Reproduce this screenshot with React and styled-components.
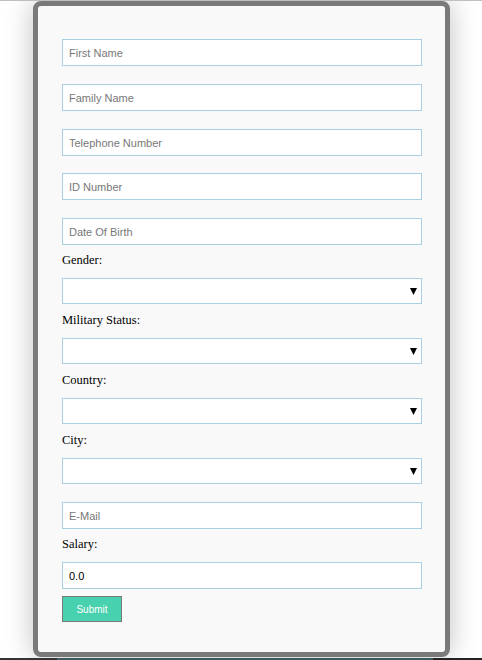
import React from "react";
import styled, { createGlobalStyle } from "styled-components";

const Global = createGlobalStyle`
  html, body { margin: 0; padding: 0; background: #ffffff; }
  body {
    border-top: 1px solid #bfbfbf;
    font-family: "Liberation Serif", "Times New Roman", serif;
  }
`;

const Page = styled.div`
  display: flex;
  flex-direction: column;
  align-items: stretch;
  height: 659px;
  overflow: hidden;
`;

const Card = styled.form`
  box-sizing: border-box;
  flex: 0 0 auto;
  margin-left: 33px;
  width: 417px;
  height: 656px;
  background: #f9f9f9;
  border: 5px solid #7a7a7a;
  border-radius: 8px;
  box-shadow: 0 0 28px rgba(0, 0, 0, 0.25);
  padding: 33px 23px 0 24px;
  display: flex;
  flex-direction: column;
  align-items: flex-start;
`;

const Input = styled.input`
  box-sizing: border-box;
  display: block;
  width: 360px;
  height: 27px;
  margin: 0 0 ${(p) => p.$mb ?? 18}px 0;
  padding: 0 6px;
  border: 1px solid #a9cfe2;
  border-radius: 0;
  background: #ffffff;
  font-family: "Liberation Sans", Arial, sans-serif;
  font-size: 11px;
  color: #000;
  outline: none;
  &::placeholder { color: #777777; opacity: 1; }
`;

const Label = styled.label`
  display: block;
  font-family: "Liberation Serif", "Times New Roman", serif;
  font-size: 12.5px;
  line-height: 15px;
  color: #000;
  margin: 0 0 10px 0;
`;

const SelectWrap = styled.div`
  position: relative;
  width: 360px;
  height: 26px;
  margin-bottom: ${(p) => p.$mb ?? 9}px;
`;

const Select = styled.select`
  box-sizing: border-box;
  appearance: none;
  -webkit-appearance: none;
  width: 100%;
  height: 100%;
  border: 1px solid #a9cfe2;
  border-radius: 0;
  background: #ffffff;
  margin: 0;
  font-family: "Liberation Sans", Arial, sans-serif;
  font-size: 11px;
  outline: none;
`;

const Arrow = styled.svg`
  position: absolute;
  right: 5px;
  top: 10px;
  width: 7px;
  height: 7px;
  pointer-events: none;
`;

const Submit = styled.button`
  box-sizing: border-box;
  width: 60px;
  height: 26px;
  background: #47d1ae;
  border: 1px solid #7a7a7a;
  border-radius: 0;
  color: #ffffff;
  font-family: "Liberation Sans", Arial, sans-serif;
  font-size: 10px;
  padding: 0;
  cursor: pointer;
`;

const BottomLine = styled.div`
  flex: 0 0 2px;
  margin-top: 1px;
  display: flex;
`;

const LineSeg = styled.div`
  flex: ${(p) => p.$flex};
  background: ${(p) => p.$c};
`;

function Dropdown({ mb }) {
  return (
    <SelectWrap $mb={mb}>
      <Select defaultValue="">
        <option value=""></option>
      </Select>
      <Arrow viewBox="0 0 7 7">
        <path d="M0 0 H7 L3.5 7 Z" fill="#000" />
      </Arrow>
    </SelectWrap>
  );
}

export default function App() {
  return (
    <>
      <Global />
      <Page>
        <Card onSubmit={(e) => e.preventDefault()}>
          <Input placeholder="First Name" />
          <Input placeholder="Family Name" />
          <Input placeholder="Telephone Number" $mb={17} />
          <Input placeholder="ID Number" />
          <Input placeholder="Date Of Birth" $mb={8} />
          <Label>Gender:</Label>
          <Dropdown />
          <Label>Military Status:</Label>
          <Dropdown />
          <Label>Country:</Label>
          <Dropdown />
          <Label>City:</Label>
          <Dropdown mb={18} />
          <Input placeholder="E-Mail" $mb={8} />
          <Label>Salary:</Label>
          <Input defaultValue="0.0" $mb={7} />
          <Submit type="submit">Submit</Submit>
        </Card>
        <BottomLine>
          <LineSeg $flex="0 0 57px" $c="#333" />
          <LineSeg $flex="1 1 auto" $c="#3d5a5a" />
          <LineSeg $flex="0 0 49px" $c="#222" />
        </BottomLine>
      </Page>
    </>
  );
}
